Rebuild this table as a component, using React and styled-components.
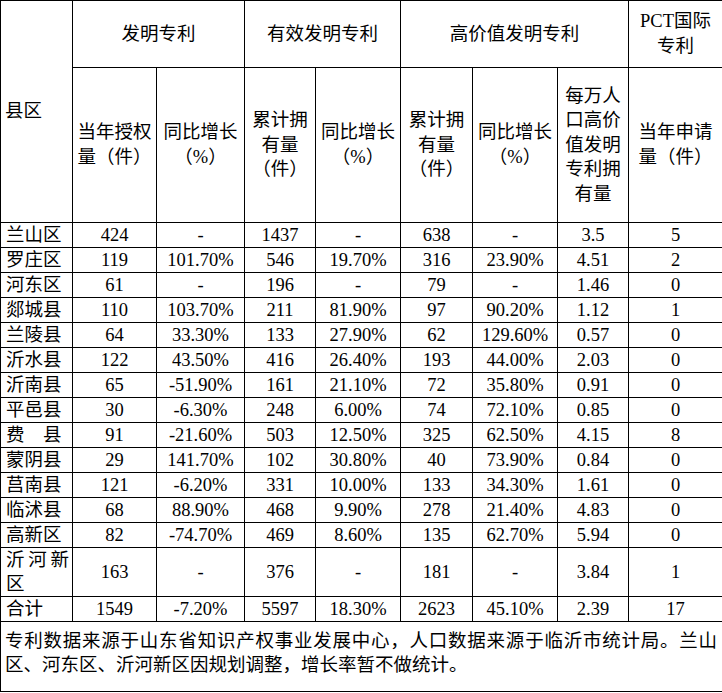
import React from "react";
import styled, { createGlobalStyle } from "styled-components";

const GlobalStyle = createGlobalStyle`
  body {
    margin: 0;
    background: #fff;
  }
`;

const colWidths = [72, 84, 88, 71, 85, 72, 85, 71, 94];

const rows = [
  ["兰山区", "424", "-", "1437", "-", "638", "-", "3.5", "5"],
  ["罗庄区", "119", "101.70%", "546", "19.70%", "316", "23.90%", "4.51", "2"],
  ["河东区", "61", "-", "196", "-", "79", "-", "1.46", "0"],
  ["郯城县", "110", "103.70%", "211", "81.90%", "97", "90.20%", "1.12", "1"],
  ["兰陵县", "64", "33.30%", "133", "27.90%", "62", "129.60%", "0.57", "0"],
  ["沂水县", "122", "43.50%", "416", "26.40%", "193", "44.00%", "2.03", "0"],
  ["沂南县", "65", "-51.90%", "161", "21.10%", "72", "35.80%", "0.91", "0"],
  ["平邑县", "30", "-6.30%", "248", "6.00%", "74", "72.10%", "0.85", "0"],
  ["费\u3000县", "91", "-21.60%", "503", "12.50%", "325", "62.50%", "4.15", "8"],
  ["蒙阴县", "29", "141.70%", "102", "30.80%", "40", "73.90%", "0.84", "0"],
  ["莒南县", "121", "-6.20%", "331", "10.00%", "133", "34.30%", "1.61", "0"],
  ["临沭县", "68", "88.90%", "468", "9.90%", "278", "21.40%", "4.83", "0"],
  ["高新区", "82", "-74.70%", "469", "8.60%", "135", "62.70%", "5.94", "0"],
  ["沂河新区", "163", "-", "376", "-", "181", "-", "3.84", "1", 49],
  ["合计", "1549", "-7.20%", "5597", "18.30%", "2623", "45.10%", "2.39", "17"],
];

const Table = styled.table`
  border-collapse: collapse;
  table-layout: fixed;
  width: 722px;
  color: #000;
  font-family: "Liberation Serif", "Noto Sans CJK SC", serif;
  font-size: 18.5px;
  line-height: 24px;
`;

const Col = styled.col`
  width: ${(p) => p.$w}px;
`;

const Row = styled.tr`
  height: ${(p) => p.$h}px;
`;

const Cell = styled.td`
  border: 1px solid #000;
  padding: 0 4px;
  font-weight: normal;
  text-align: ${(p) => p.$align || "center"};
  vertical-align: middle;
`;

const HeadCell = styled(Cell).attrs({ as: "th" })`
  line-height: 24.6px;
`;

const NameCell = styled(Cell)`
  padding: 0 3px 0 5px;
  text-align: justify;
  text-justify: inter-character;
`;

const NoteCell = styled(Cell)`
  vertical-align: top;
  padding: 7px 5px 0 4px;
  text-align: justify;
  text-justify: inter-character;
`;

function App() {
  return (
    <>
      <GlobalStyle />
      <Table>
        <colgroup>
          {colWidths.map((w, i) => (
            <Col key={i} $w={w} />
          ))}
        </colgroup>
        <thead>
          <Row $h={67}>
            <HeadCell rowSpan={2} $align="left">
              县区
            </HeadCell>
            <HeadCell colSpan={2}>发明专利</HeadCell>
            <HeadCell colSpan={2}>有效发明专利</HeadCell>
            <HeadCell colSpan={3}>高价值发明专利</HeadCell>
            <HeadCell>PCT国际专利</HeadCell>
          </Row>
          <Row $h={155}>
            <HeadCell>当年授权量（件）</HeadCell>
            <HeadCell>同比增长（%）</HeadCell>
            <HeadCell>累计拥有量（件）</HeadCell>
            <HeadCell>同比增长（%）</HeadCell>
            <HeadCell>累计拥有量（件）</HeadCell>
            <HeadCell>同比增长（%）</HeadCell>
            <HeadCell>每万人口高价值发明专利拥有量</HeadCell>
            <HeadCell>当年申请量（件）</HeadCell>
          </Row>
        </thead>
        <tbody>
          {rows.map((r) => (
            <Row key={r[0]} $h={r[9] || 24.6}>
              <NameCell>{r[0]}</NameCell>
              {r.slice(1, 9).map((v, i) => (
                <Cell key={i}>{v}</Cell>
              ))}
            </Row>
          ))}
          <Row $h={70}>
            <NoteCell colSpan={9}>
              专利数据来源于山东省知识产权事业发展中心，人口数据来源于临沂市统计局。兰山区、河东区、沂河新区因规划调整，增长率暂不做统计。
            </NoteCell>
          </Row>
        </tbody>
      </Table>
    </>
  );
}

export default App;
